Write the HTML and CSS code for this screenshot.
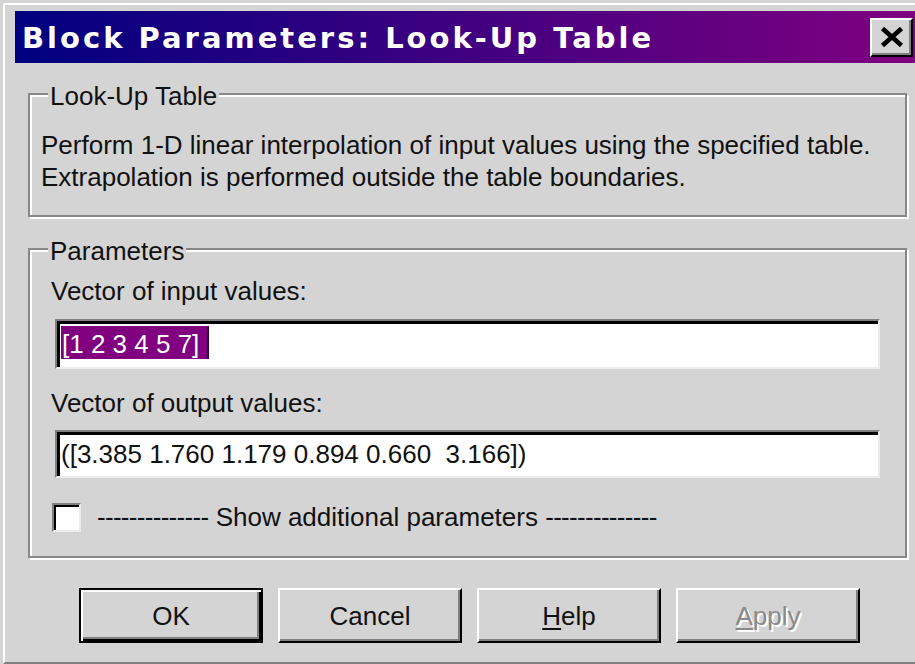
FILE: index.html
```html
<!DOCTYPE html>
<html lang="en">
<head>
<meta charset="utf-8">
<title>Block Parameters: Look-Up Table</title>
<link rel="stylesheet" href="styles.css">
</head>
<body>
<div class="window">
  <div class="titlebar">
    <span class="title">Block Parameters: Look-Up Table</span>
    <button class="close" type="button" aria-label="Close">
      <svg width="24" height="20" viewBox="0 0 24 20" aria-hidden="true">
        <path d="M2.5 1.5 L21.5 18.5 M21.5 1.5 L2.5 18.5" stroke="#000" stroke-width="4.6" fill="none"/>
      </svg>
    </button>
  </div>

  <fieldset class="group group-info">
    <legend>Look-Up Table</legend>
    <p class="desc">Perform 1-D linear interpolation of input values using the specified table.<br>Extrapolation is performed outside the table boundaries.</p>
  </fieldset>

  <fieldset class="group group-params">
    <legend>Parameters</legend>
    <div class="params">
      <div class="field-label">Vector of input values:</div>
      <div class="field field-input"><span class="sel">[1 2 3 4 5 7]</span></div>
      <div class="field-label field-label-out">Vector of output values:</div>
      <div class="field field-output">([3.385 1.760 1.179 0.894 0.660  3.166])</div>
      <div class="check-row">
        <span class="check"></span>
        <span class="check-text"><span class="dashes">--------------</span> Show additional parameters <span class="dashes">--------------</span></span>
      </div>
    </div>
  </fieldset>

  <div class="buttons">
    <button class="btn btn-default" type="button">OK</button>
    <button class="btn" type="button">Cancel</button>
    <button class="btn" type="button"><u>H</u>elp</button>
    <button class="btn btn-disabled" type="button" disabled><u>A</u>pply</button>
  </div>
</div>
</body>
</html>
```

FILE: styles.css
```css
* {
  box-sizing: border-box;
}

html,
body {
  margin: 0;
  height: 100%;
}

body {
  background: #d4d4d4;
  overflow: hidden;
  font-family: "Liberation Sans", Arial, sans-serif;
  font-size: 26px;
  color: #111;
}

/* dialog frame */
.window {
  margin: 3px 0 0 3px;
  width: 920px;
  height: 661px;
  padding: 6px 0 0 10px;
  border-top: 2px solid #fff;
  border-left: 2px solid #fff;
  border-bottom: 2px solid #808080;
}

/* caption bar */
.titlebar {
  width: 904px;
  height: 52px;
  display: flex;
  align-items: center;
  justify-content: space-between;
  padding-left: 7px;
  background: linear-gradient(90deg, #000080 0%, #800080 100%);
}

.title {
  font-family: "DejaVu Sans", sans-serif;
  font-weight: bold;
  font-size: 29px;
  letter-spacing: 3px;
  color: #fff;
  padding-top: 2px;
  white-space: nowrap;
}

.close {
  width: 43px;
  height: 39px;
  margin-right: 6px;
  padding: 0;
  display: flex;
  align-items: center;
  justify-content: center;
  background: #d4d4d4;
  border: 2px solid;
  border-color: #fff #000 #000 #fff;
  box-shadow: inset -2px -2px 0 #808080;
}

/* etched group boxes */
.group {
  margin: 18px 0 0 13px;
  width: 879px;
  min-width: 0;
  padding: 22px 11px;
  border: 2px solid #888;
  box-shadow: 2px 2px 0 #fff, inset 2px 2px 0 #fff;
}

.group legend {
  margin-left: 7px;
  padding: 4px 2px 0;
  line-height: 22px;
  background: #d4d4d4;
}

.desc {
  margin: 0;
  line-height: 32px;
}

.group-params {
  margin-top: 19px;
  padding: 13px 11px 23px;
}

.params {
  padding: 0 14px 0 10px;
  line-height: 32px;
}

.field-label-out {
  margin-top: 18px;
}

/* sunken edit fields */
.field {
  margin-left: 4px;
  height: 50px;
  padding: 7px 0 0 4px;
  background: #fff;
  border: 2px solid;
  border-color: #808080 #ececec #ececec #808080;
  box-shadow: inset 3px 3px 0 #000;
  white-space: pre;
}

.field-input {
  margin-top: 12px;
}

.field-output {
  margin-top: 11px;
  height: 48px;
  padding-top: 6px;
}

.sel {
  padding: 3px 8px 0 1px;
  background: #800080;
  color: #fff;
  border-right: 2px solid #300030;
}

/* checkbox row */
.check-row {
  display: flex;
  align-items: center;
  gap: 16px;
  margin-top: 23px;
}

.check {
  width: 29px;
  height: 29px;
  margin-left: 1px;
  background: #fff;
  border: 2px solid;
  border-color: #808080 #ececec #ececec #808080;
  box-shadow: inset 2px 2px 0 #000;
}

.dashes {
  letter-spacing: -0.7px;
}

/* command buttons */
.buttons {
  display: flex;
  gap: 15px;
  margin: 30px 0 0 64px;
}

.btn {
  width: 184px;
  height: 55px;
  padding: 0;
  font: inherit;
  line-height: 32px;
  color: #111;
  background: #d4d4d4;
  border: 2px solid;
  border-color: #fff #000 #000 #fff;
  box-shadow: inset -2px -2px 0 #808080;
}

.btn-default {
  border-color: #000;
  box-shadow: inset 2px 2px 0 #fff, inset -2px -2px 0 #000, inset -4px -4px 0 #808080;
}

.btn u {
  text-decoration-thickness: 2px;
  text-underline-offset: 3px;
}

.btn-disabled {
  color: #8a8a8a;
  text-shadow: 2px 2px 0 #fff;
}
```
